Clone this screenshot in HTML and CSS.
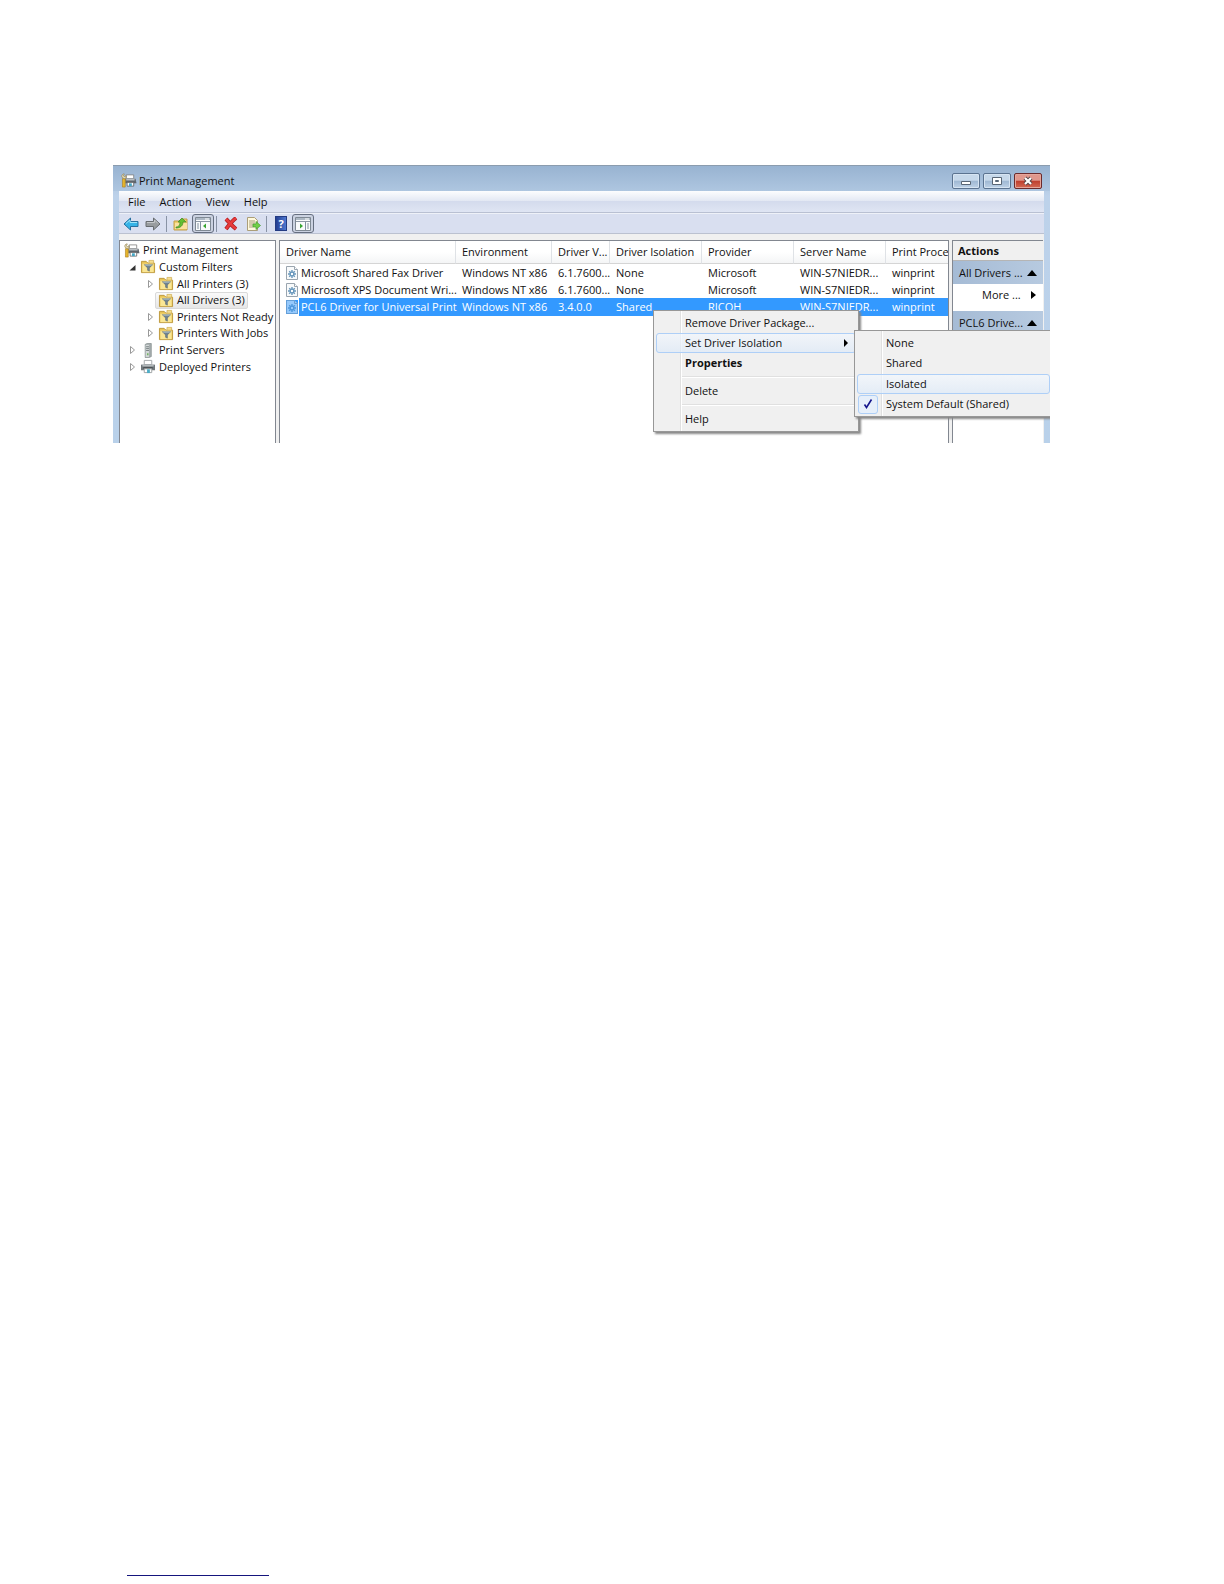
FILE: index.html
```html
<!DOCTYPE html>
<html lang="en">
<head>
<meta charset="utf-8">
<title>Print Management</title>
<link rel="stylesheet" href="styles.css">
</head>
<body>
<svg class="defs" aria-hidden="true">
  <symbol id="pm" viewBox="0 0 16 16">
    <path d="M5 2h8v4H5z" fill="#fff" stroke="#777" stroke-width=".8"/>
    <path d="M4 6h11l1 5H4z" fill="#5f666c"/><path d="M5 6h9v2H5z" fill="#b9bec2"/>
    <path d="M6 10h7v4H6z" fill="#fff" stroke="#555" stroke-width=".8"/><path d="M8 11h3v3H8z" fill="#47a7c5"/>
    <path d="M1 6h3v9H1z" fill="#e5b52c" stroke="#a7781a" stroke-width=".6"/>
    <path d="M2 1a2.500 2.500 0 0 0-1 4l2 1 2-1V3L3 4 2 3l1-2z" fill="#eee3ba" stroke="#8c7d50" stroke-width=".7"/>
  </symbol>
  <symbol id="folder" viewBox="0 0 16 16">
    <path d="M1 2.500h5l2 2h7v10H1z" fill="#e8c454" stroke="#bc983c"/><path d="M9 1.500h5v3H9z" fill="#f5de90" stroke="#c9a64d" stroke-width=".7"/>
    <path d="M2 5h12v9H2z" fill="#fae694"/><path d="M4 6h9L9.500 9.500V13l-2-1V9.500z" fill="#708390" stroke="#4f616d" stroke-width=".5"/><path d="M5 6h7v1H5z" fill="#b8cbd3"/>
  </symbol>
  <symbol id="driver" viewBox="0 0 12 14">
    <path d="M.5.5h8l3 3v10H.5z" fill="#f8fafb" stroke="#9aa5af"/><path d="M8.500.5v3h3" fill="#fff" stroke="#9aa5af"/>
    <path d="M6 4v8M2 8h8M3.200 5.200l5.600 5.600M8.800 5.200l-5.600 5.600" stroke="#6796bb" stroke-width="1.400"/><circle cx="6" cy="8" r="1.800" fill="#fff" stroke="#6796bb" stroke-width="1.200"/>
  </symbol>
  <symbol id="server" viewBox="0 0 16 16">
    <path d="M5 1.500 7 .5h4.500v14L9 15.500H5z" fill="#a7aeaf" stroke="#7c8585" stroke-width=".7"/><path d="M5.500 2H9v13H5.500z" fill="#d3d8d8"/><path d="M6 4h3M6 6h3M6 8h3" stroke="#747d7f"/><path d="M7 11h1.500v2H7z" fill="#6eb35b"/>
  </symbol>
  <symbol id="printer" viewBox="0 0 16 16">
    <path d="M4 1.500h8V6H4z" fill="#fff" stroke="#a2a8aa"/><path d="M.5 6h15v6H.5z" fill="#70777b"/><path d="M2 6h12v2H2z" fill="#b4babd"/><path d="M3 9h10v1H3z" fill="#303638"/><path d="M4 10.500h8v4H4z" fill="#fff" stroke="#9ca1a3"/><path d="M7 11h3v4H7z" fill="#4cacc6"/>
  </symbol>
  <symbol id="closed" viewBox="0 0 8 10"><path d="M1.500 1.500v7l4-3.500z" fill="#fff" stroke="#999"/></symbol>
  <symbol id="open" viewBox="0 0 8 10"><path d="M6.500 3v5.500H.5z" fill="#333"/></symbol>
  <symbol id="pane" viewBox="0 0 16 14">
    <path d="M.5.5h15v13H.5z" fill="#f9fbfc" stroke="#7f8994"/><path d="M1 1h14v2H1z" fill="#aeb9c5"/><path d="M10 2h4" stroke="#fff"/><path d="M1 4.500h14" stroke="#8d98a5"/>
  </symbol>
</svg>
<main class="page">
<section class="window">
  <header class="titlebar">
    <svg class="icon"><use href="#pm"/></svg><h1 class="title">Print Management</h1>
    <div class="controls">
      <button class="control" aria-label="Minimize"><svg viewBox="0 0 26 14"><path d="M8.500 7.500h9v3h-9z" fill="#fff" stroke="#596675"/></svg></button>
      <button class="control" aria-label="Maximize"><svg viewBox="0 0 26 14"><path d="M8.500 3.500h9v7h-9z" fill="#fff" stroke="#596675"/><path d="M11.500 6.500h3v1h-3z" fill="#9fb8d3" stroke="#596675"/></svg></button>
      <button class="control close" aria-label="Close"><svg viewBox="0 0 26 14"><path d="m10 4 6 6m0-6-6 6" stroke="#554447" stroke-width="4"/><path d="m10 4 6 6m0-6-6 6" stroke="#fff" stroke-width="2.200"/></svg></button>
    </div>
  </header>
  <nav class="menubar"><button>File</button><button>Action</button><button>View</button><button>Help</button></nav>
  <div class="toolbar">
    <button class="tool" aria-label="Back"><svg viewBox="0 0 16 14"><path d="M1 7 7.500 1v3.500H15v5H7.500V13z" fill="#35b3e7" stroke="#27709f"/><path d="m3 6.500 4-3.500v2.500h7" fill="none" stroke="#9de4f9"/></svg></button>
    <button class="tool" aria-label="Forward"><svg viewBox="0 0 16 14"><path d="M15 7 8.500 1v3.500H1v5h7.500V13z" fill="#989c9f" stroke="#686c70"/><path d="M2 5.500h7.500V3L13 6.500" fill="none" stroke="#c4c7c9"/></svg></button>
    <span class="divider"></span>
    <button class="tool" aria-label="Up one level"><svg viewBox="0 0 16 14"><path d="M1 4h5l2-2h6v11H1z" fill="#f0cf6b" stroke="#c29d4b"/><path d="M2 6h12v6H2z" fill="#f9e1a0"/><path d="M3 10c3 0 4-2 4-5H5l4-4 4 4h-3c0 4-3 6-7 6z" fill="#63bf30" stroke="#41882a" stroke-width=".7"/></svg></button>
    <button class="tool pressed" aria-label="Show console tree"><svg viewBox="0 0 16 14"><use href="#pane"/><path d="M5.500 5v8M2 7h2M2 9h2M2 11h2" stroke="#8291a0"/><path d="M11 6.500v5L8 9z" fill="#38a531"/></svg></button>
    <span class="divider"></span>
    <button class="tool" aria-label="Delete"><svg viewBox="0 0 16 14"><path d="M3 2c3 3 6 7 10 10M13 1C9 4 6 8 3 12" fill="none" stroke="#a91c20" stroke-width="4"/><path d="M3 2c3 3 6 7 10 10M13 1C9 4 6 8 3 12" fill="none" stroke="#e83b3c" stroke-width="2.500"/></svg></button>
    <button class="tool" aria-label="Export list"><svg viewBox="0 0 16 14"><path d="M2.500.5h7l3 3v10h-10z" fill="#fff9dc" stroke="#ab9e79"/><path d="M4 4h6M4 6h6M4 8h5M4 10h4" stroke="#a59b7c"/><path d="M8 7h3V4.500L15.500 8.500 11 12.500V10H8z" fill="#72cf47" stroke="#419b32" stroke-width=".7"/></svg></button>
    <span class="divider"></span>
    <button class="tool help" aria-label="Help"><span>?</span></button>
    <button class="tool pressed" aria-label="Show action pane"><svg viewBox="0 0 16 14"><use href="#pane"/><path d="M10.500 5v8M12 7h2M12 9h2M12 11h2" stroke="#8291a0"/><path d="M5 6.500v5L8 9z" fill="#38a531"/></svg></button>
  </div>
  <div class="panes">
    <ul class="tree">
      <li class="node root"><svg class="icon"><use href="#pm"/></svg>Print Management</li>
      <li class="node"><svg class="arrow"><use href="#open"/></svg><svg class="icon"><use href="#folder"/></svg>Custom Filters</li>
      <li class="node child"><svg class="arrow"><use href="#closed"/></svg><svg class="icon"><use href="#folder"/></svg>All Printers (3)</li>
      <li class="node child"><span class="arrow"></span><span class="selected"><svg class="icon"><use href="#folder"/></svg>All Drivers (3)</span></li>
      <li class="node child"><svg class="arrow"><use href="#closed"/></svg><svg class="icon"><use href="#folder"/></svg>Printers Not Ready</li>
      <li class="node child"><svg class="arrow"><use href="#closed"/></svg><svg class="icon"><use href="#folder"/></svg>Printers With Jobs</li>
      <li class="node"><svg class="arrow"><use href="#closed"/></svg><svg class="icon"><use href="#server"/></svg>Print Servers</li>
      <li class="node"><svg class="arrow"><use href="#closed"/></svg><svg class="icon"><use href="#printer"/></svg>Deployed Printers</li>
    </ul>
    <div class="list">
      <table class="drivers">
        <colgroup><col class="c-name"><col class="c-env"><col class="c-ver"><col class="c-mid"><col class="c-mid"><col class="c-mid"><col class="c-proc"></colgroup>
        <thead><tr><th>Driver Name</th><th>Environment</th><th>Driver V...</th><th>Driver Isolation</th><th>Provider</th><th>Server Name</th><th>Print Proce</th></tr></thead>
        <tbody>
          <tr><td><span class="name"><svg class="doc"><use href="#driver"/></svg>Microsoft Shared Fax Driver</span></td><td>Windows NT x86</td><td>6.1.7600...</td><td>None</td><td>Microsoft</td><td>WIN-S7NIEDR...</td><td>winprint</td></tr>
          <tr><td><span class="name"><svg class="doc"><use href="#driver"/></svg>Microsoft XPS Document Wri...</span></td><td>Windows NT x86</td><td>6.1.7600...</td><td>None</td><td>Microsoft</td><td>WIN-S7NIEDR...</td><td>winprint</td></tr>
          <tr class="active"><td><span class="name"><svg class="doc"><use href="#driver"/></svg>PCL6 Driver for Universal Print</span></td><td>Windows NT x86</td><td>3.4.0.0</td><td>Shared</td><td>RICOH</td><td>WIN-S7NIEDR...</td><td>winprint</td></tr>
        </tbody>
      </table>
    </div>
    <aside class="actions">
      <h2 class="heading">Actions</h2>
      <button class="group">All Drivers ...<svg viewBox="0 0 10 6"><path d="m0 6 5-6 5 6z"/></svg></button>
      <button class="more">More ...<svg viewBox="0 0 10 8"><path d="m4 0 5 4-5 4z"/></svg></button>
      <button class="group">PCL6 Drive...<svg viewBox="0 0 10 6"><path d="m0 6 5-6 5 6z"/></svg></button>
    </aside>
  </div>
  <div class="menu context">
    <button class="item">Remove Driver Package...</button>
    <button class="item hot">Set Driver Isolation<svg viewBox="0 0 6 8"><path d="m1 0 4 4-4 4z"/></svg></button>
    <button class="item default">Properties</button>
    <hr class="rule">
    <button class="item">Delete</button>
    <hr class="rule">
    <button class="item">Help</button>
  </div>
  <div class="menu submenu">
    <button class="item">None</button>
    <button class="item">Shared</button>
    <button class="item hot">Isolated</button>
    <button class="item"><span class="check"><svg viewBox="0 0 10 10"><path d="m1.500 5.500 2 3 5-8" fill="none" stroke="#15158c" stroke-width="1.600"/></svg></span>System Default (Shared)</button>
  </div>
</section>
<hr class="footline">
</main>
</body>
</html>
```
FILE: styles.css
```css
* { box-sizing: border-box; }
body { margin: 0; background: #fff; color: #111; font: 11px/16px "Open Sans", "Noto Sans", sans-serif; }
button { margin: 0; padding: 0; border: 0; background: none; color: inherit; font: inherit; text-align: left; white-space: nowrap; }
h1, h2, ul { margin: 0; padding: 0; font: inherit; }
.defs { display: none; }
.page { display: flex; flex-direction: column; min-height: 100vh; padding: 165px 174px 8px 113px; }
.footline { width: 142px; height: 1px; margin: auto 0 0 14px; border: 0; background: #15157d; }

.window { position: relative; overflow: hidden; padding: 0 6px; background: linear-gradient(#a0bad8, #bdd2ea 30px, #b9d1ea); border-top: 1px solid #8b9cae; }
.icon { flex: none; width: 16px; height: 15px; }
.titlebar { display: flex; align-items: center; gap: 2px; height: 25px; margin: 0 -6px; padding: 4px 8px 0; background: linear-gradient(#98b3d1, #aec6e0); }
.controls { display: flex; gap: 3px; margin-left: auto; }
.control { display: flex; width: 28px; height: 16px; border: 1px solid #5b7390; border-radius: 2px; background: linear-gradient(#c6d8ea 45%, #9fb8d3 50%, #bed2e7); box-shadow: inset 0 0 0 1px #d6e4f2; }
.control svg { width: 26px; height: 14px; }
.close { border-color: #6b2b2d; background: linear-gradient(#e0978c 45%, #be3e2e 50%, #d46a55); box-shadow: inset 0 0 0 1px #e5a69b; }

.menubar { display: flex; align-items: center; gap: 14px; height: 22px; padding-left: 9px; background: linear-gradient(#fcfdfe, #e4e9f4 45%, #d4dbed 50%, #dfe5f3); border-bottom: 1px solid #b9c0d2; }
.toolbar { display: flex; align-items: center; height: 21px; padding-left: 1px; background: #d9dff0; border-top: 1px solid #eef1f8; border-bottom: 1px solid #bbc1d0; }
.tool { display: flex; align-items: center; justify-content: center; width: 22px; height: 20px; }
.tool svg { width: 16px; height: 14px; }
.pressed { height: 19px; border: 1px solid #666f80; border-radius: 3px; background: #cbd2e1; }
.divider { width: 1px; height: 16px; margin: 0 3px 0 2px; background: #8993a5; }
.help span { width: 12px; height: 15px; background: linear-gradient(90deg, #233e91, #4f79d1); border: 1px solid #233b82; color: #fff; font-weight: 700; line-height: 13px; text-align: center; }

.panes { display: flex; gap: 3px; min-height: 209px; padding: 6px 1px 0 0; background: #f0f0f0; }
.tree { display: grid; align-content: start; grid-template-rows: repeat(8, 1fr); flex: none; width: 157px; height: 203px; padding: 1px 0 68px 4px; background: #fff; border: solid #828790; border-width: 1px 1px 0; list-style: none; }
.node { display: flex; align-items: center; gap: 3px; min-height: 0; padding-left: 5px; white-space: nowrap; }
.root { padding-left: 0; }
.child { padding-left: 23px; }
.arrow { flex: none; width: 8px; height: 10px; }
.selected { display: flex; align-items: center; gap: 3px; height: 17px; margin-left: -3px; padding: 0 2px; border: 1px solid #d9d9d9; border-radius: 2px; background: linear-gradient(#fafafa, #e6e6e6); }

.list { flex: 1; min-width: 0; background: #fff; border: solid #828790; border-width: 1px 1px 0; overflow: hidden; }
.drivers { width: 100%; table-layout: fixed; border-collapse: separate; border-spacing: 0; }
.c-name { width: 176px; } .c-env { width: 96px; } .c-ver { width: 58px; } .c-mid { width: 92px; }
.drivers th, .drivers td { padding: 0 0 0 6px; text-align: left; font-weight: 400; white-space: nowrap; }
.drivers th { height: 23px; border-right: 1px solid #dfe2e6; border-bottom: 1px solid #d5d5d5; background: linear-gradient(#fff 50%, #f4f5f6); }
.drivers th:last-child { border-right: 0; }
.drivers td { height: 17px; line-height: 17px; }
.active td { height: 18px; line-height: 18px; }
.name { display: flex; align-items: center; gap: 3px; }
.doc { flex: none; width: 12px; height: 14px; }
.active td { background: #3399ff; color: #fff; }
.active td:first-child { background: linear-gradient(90deg, #fff 19px, #3399ff 19px); }
.active .doc { background: #3399ff; }
.active .doc use { opacity: 0.5; }

.actions { flex: none; width: 91px; background: #fff; border: solid #828790; border-width: 1px 0 0 1px; }
.heading { height: 20px; padding-left: 5px; background: #f0f0f0; border-bottom: 1px solid #b5b5b5; font-weight: 700; line-height: 20px; }
.group, .more { display: flex; align-items: center; justify-content: space-between; width: 100%; height: 23px; padding: 0 6px; }
.group { background: linear-gradient(90deg, #a5bbd5, #b7cae0); }
.more { height: 22px; margin-bottom: 5px; padding-left: 29px; }
.actions svg { width: 10px; height: 8px; }

.menu { position: absolute; padding: 2px; border: 1px solid #979797; background: linear-gradient(90deg, #f0f0f0 26px, #e0e0e0 26px, #e0e0e0 27px, #fff 27px, #fff 28px, #f0f0f0 28px); box-shadow: 2px 2px 2px #888; }
.context { top: 144px; left: 540px; width: 206px; }
.submenu { top: 164px; left: 741px; right: 0; display: grid; grid-auto-rows: 1fr; height: 87px; border-right: 0; padding-right: 0; }
.item { position: relative; display: flex; align-items: center; justify-content: space-between; width: 100%; min-height: 20px; padding: 0 6px 0 28px; border: 1px solid transparent; border-radius: 3px; }
.item > svg { width: 6px; height: 8px; }
.hot { border-color: #aecff7; background: linear-gradient(rgba(242, 247, 253, 0.7), rgba(222, 234, 248, 0.7)); }
.default { font-weight: 700; }
.rule { height: 2px; margin: 3px 0 3px 26px; border: solid #e0e0e0; border-width: 1px 0 0; background: #fff; }
.check { position: absolute; top: 0; left: 0; display: flex; align-items: center; justify-content: center; width: 20px; height: 19px; border: 1px solid #aecff7; border-radius: 3px; background: #e6effa; }
.check svg { width: 10px; height: 10px; }
```
